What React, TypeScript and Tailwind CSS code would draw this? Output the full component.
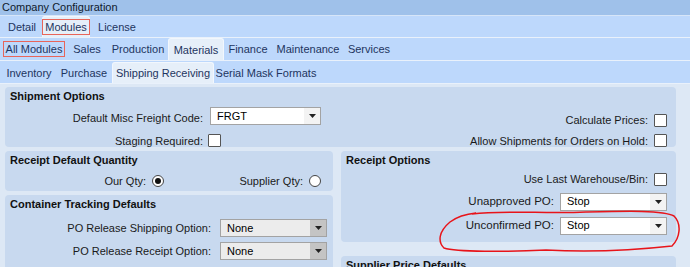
import React from "react";

const font = { fontFamily: '"Liberation Sans", Arial, sans-serif' };

function Tab({ label, selected, boxed, w }: { label: string; selected?: boolean; boxed?: boolean; w?: number }) {
  return (
    <div
      className={
        "flex shrink-0 items-center justify-center h-full whitespace-nowrap text-[11px] text-[#1e3560] " +
        (selected ? "bg-[#e6eff9] rounded-t-[3px] border-x border-t border-[#f2f7fd]" : "")
      }
      style={{ width: w }}
    >
      <span className={boxed ? "border border-[#e8655a] px-[2px] leading-[14px]" : "leading-[14px]"}>{label}</span>
    </div>
  );
}

function Check({ className = "" }: { className?: string }) {
  return <div className={"w-[13px] h-[13px] bg-white border border-[#555] rounded-[1px] " + className} />;
}

function Select({ value, w, disabled }: { value: string; w: number; disabled?: boolean }) {
  return (
    <div
      className={
        "flex items-center h-[18px] border border-[#a3a3a3] " + (disabled ? "bg-[#ececec]" : "bg-white")
      }
      style={{ width: w }}
    >
      <span className="flex-1 pl-[6px] text-[11px] text-black leading-none">{value}</span>
      <div
        className={
          "w-[16px] h-full flex items-center justify-center " +
          (disabled ? "bg-[#c4c4c4]" : "bg-[#f3f3f3]")
        }
      >
        <svg width="7" height="4" viewBox="0 0 7 4">
          <path d="M0 0h7L3.5 4z" fill="#222" />
        </svg>
      </div>
    </div>
  );
}

function Radio({ checked }: { checked?: boolean }) {
  return (
    <div className="w-[12px] h-[12px] rounded-full border border-[#444] bg-white flex items-center justify-center">
      {checked && <div className="w-[6px] h-[6px] rounded-full bg-[#111]" />}
    </div>
  );
}

function Title({ children }: { children: React.ReactNode }) {
  return <div className="text-[11px] font-bold text-[#111] leading-[13px] pl-[5px]">{children}</div>;
}

export default function App() {
  return (
    <div className="w-[690px] h-[267px] overflow-hidden bg-[#dde8f5] text-[#1a1a1a]" style={font}>
      {/* Title bar */}
      <div className="h-[15px] bg-[#9fc1ea] text-[11px] leading-[15px] pl-[2px] text-[#0f1a2c]">Company Configuration</div>
      <div className="h-[1px] bg-[#d6e5f8]" />
      {/* Row 1 */}
      <div className="h-[22px] bg-[#bdd8fc] flex items-end pl-[2px] border-b border-[#e9f1fb]">
        <div className="flex h-[21px]">
          <Tab label="Detail" w={40} />
          <Tab label="Modules" selected boxed w={48} />
          <Tab label="License" w={54} />
        </div>
      </div>
      {/* Row 2 */}
      <div className="h-[23px] bg-[#bdd8fc] flex items-end pl-[2px] border-b border-[#e9f1fb]">
        <div className="flex h-[22px]">
          <Tab label="All Modules" boxed w={64} />
          <Tab label="Sales" w={42} />
          <Tab label="Production" w={60} />
          <Tab label="Materials" selected w={56} />
          <Tab label="Finance" w={48} />
          <Tab label="Maintenance" w={72} />
          <Tab label="Services" w={50} />
        </div>
      </div>
      {/* Row 3 */}
      <div className="h-[23px] bg-[#bdd8fc] flex items-end pl-[2px] border-b border-[#e9f1fb]">
        <div className="flex h-[21px]">
          <Tab label="Inventory" w={54} />
          <Tab label="Purchase" w={56} />
          <Tab label="Shipping Receiving" selected w={102} />
          <Tab label="Serial Mask Formats" w={104} />
        </div>
      </div>

      {/* Content */}
      <div className="pl-[5px] pr-[14px] pt-[3px] flex flex-col gap-[4px] relative">
        {/* Shipment Options */}
        <div className="bg-[#c8d9ef] rounded-[4px] h-[60px] pt-[3px] relative">
          <Title>Shipment Options</Title>
          <div className="flex mt-[4px]">
            <div className="w-[198px] text-right text-[11px] pt-[3px]">Default Misc Freight Code:</div>
            <div className="ml-[7px] mt-[0px]">
              <Select value="FRGT" w={111} />
            </div>
            <div className="flex-1 flex justify-end items-center pr-[9px] pt-[5px] gap-[6px] text-[11px]">
              <span>Calculate Prices:</span>
              <Check />
            </div>
          </div>
          <div className="flex mt-[4px] items-center">
            <div className="w-[198px] text-right text-[11px]">Staging Required:</div>
            <Check className="ml-[5px]" />
            <div className="flex-1 flex justify-end items-center pr-[9px] gap-[6px] text-[11px]">
              <span>Allow Shipments for Orders on Hold:</span>
              <Check />
            </div>
          </div>
        </div>

        <div className="flex gap-[8px]">
          <div className="w-[328px] flex flex-col gap-[4px]">
            {/* Receipt Default Quantity */}
            <div className="bg-[#c8d9ef] rounded-[4px] h-[40px] pt-[3px]">
              <Title>Receipt Default Quantity</Title>
              <div className="flex items-center mt-[6px] text-[11px]">
                <div className="w-[141px] text-right">Our Qty:</div>
                <div className="ml-[6px]"><Radio checked /></div>
                <div className="w-[139px] text-right">Supplier Qty:</div>
                <div className="ml-[6px]"><Radio /></div>
              </div>
            </div>
            {/* Container Tracking */}
            <div className="bg-[#c8d9ef] rounded-[4px] h-[80px] pt-[3px]">
              <Title>Container Tracking Defaults</Title>
              <div className="flex items-center mt-[8px] text-[11px]">
                <div className="w-[206px] text-right">PO Release Shipping Option:</div>
                <div className="ml-[9px]"><Select value="None" w={107} disabled /></div>
              </div>
              <div className="flex items-center mt-[5px] text-[11px]">
                <div className="w-[206px] text-right">PO Release Receipt Option:</div>
                <div className="ml-[9px]"><Select value="None" w={107} disabled /></div>
              </div>
            </div>
          </div>

          <div className="flex-1 flex flex-col gap-[14px]">
            {/* Receipt Options */}
            <div className="bg-[#c8d9ef] rounded-[4px] h-[91px] pt-[3px] relative">
              <Title>Receipt Options</Title>
              <div className="flex justify-end items-center pr-[9px] mt-[4px] gap-[6px] text-[11px]">
                <span>Use Last Warehouse/Bin:</span>
                <Check />
              </div>
              <div className="flex justify-end items-center pr-[9px] mt-[5px] gap-[6px] text-[11.5px]">
                <span>Unapproved PO:</span>
                <Select value="Stop" w={107} />
              </div>
              <div className="flex justify-end items-center pr-[9px] mt-[6px] gap-[6px] text-[11.5px]">
                <span>Unconfirmed PO:</span>
                <Select value="Stop" w={107} />
              </div>
            </div>
            <div className="bg-[#c8d9ef] rounded-t-[4px] h-[20px] pt-[3px]">
              <Title>Supplier Price Defaults</Title>
            </div>
          </div>
        </div>

        {/* Hand-drawn red ellipse */}
        <svg className="absolute left-[436px] top-[124px] pointer-events-none" width="246" height="46" viewBox="0 0 246 46">
          <path
            d="M36 6 C 70 2, 110 6, 150 4 C 190 3, 228 2, 238 8 C 246 16, 244 30, 236 38 C 200 42, 150 44, 110 42 C 70 44, 20 44, 8 40 C 2 34, 2 24, 14 14 C 22 8, 30 6, 40 5"
            fill="none"
            stroke="#e8141a"
            strokeWidth="1.5"
          />
        </svg>
      </div>
    </div>
  );
}
